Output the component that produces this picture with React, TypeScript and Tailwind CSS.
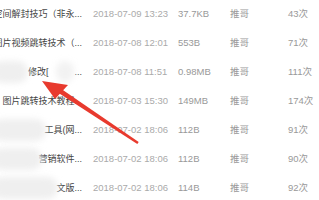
import React from 'react';

type Row = { name: React.ReactNode; date: string; size: string; author: string; count: string };

const ROWS: Row[] = [
  { name: '空间解封技巧（非永...', date: '2018-07-09 13:23', size: '37.7KB', author: '推哥', count: '43次' },
  { name: '图片视频跳转技术（...', date: '2018-07-08 12:01', size: '553B', author: '推哥', count: '71次' },
  {
    name: (
      <>
        <span>修改[</span>
        <span className="ml-[26px]">...</span>
      </>
    ),
    date: '2018-07-08 11:51',
    size: '0.98MB',
    author: '推哥',
    count: '111次',
  },
  { name: '图片跳转技术教程...', date: '2018-07-03 15:30', size: '149MB', author: '推哥', count: '174次' },
  { name: '工具(网...', date: '2018-07-02 18:06', size: '112B', author: '推哥', count: '91次' },
  { name: '营销软件...', date: '2018-07-02 18:06', size: '112B', author: '推哥', count: '90次' },
  { name: '文版...', date: '2018-07-02 18:06', size: '114B', author: '推哥', count: '92次' },
];

export default function App() {
  return (
    <div
      className="relative w-[319px] h-[200px] overflow-hidden bg-white text-[9.5px]"
      style={{ fontFamily: '"Liberation Sans", "Noto Sans CJK SC", sans-serif' }}
    >
      <div className="flex flex-col">
        {ROWS.map((r, i) => (
          <div key={i} className="flex items-center h-[29px] whitespace-nowrap">
            <div className="w-[82px] shrink-0 flex justify-end overflow-hidden text-[9px] text-[#444]">{r.name}</div>
            <div className="ml-[11px] w-[85px] shrink-0 text-[#aaa]">{r.date}</div>
            <div className="w-[52px] shrink-0 text-[#999]">{r.size}</div>
            <div className="w-[58px] shrink-0 text-[#999]">{r.author}</div>
            <div className="text-[#999]">{r.count}</div>
          </div>
        ))}
      </div>

      {/* smudges over names */}
      <div className="absolute left-[-8px] top-[61px] w-[36px] h-[22px] rounded-full bg-[#efefef] blur-[3px]" />
      <div className="absolute left-[56px] top-[61px] w-[18px] h-[21px] rounded-full bg-[#f2f2f2] blur-[3px]" />
      <div className="absolute left-[-8px] top-[119px] w-[54px] h-[22px] rounded-full bg-[#efefef] blur-[3px]" />
      <div className="absolute left-[-8px] top-[148px] w-[50px] h-[22px] rounded-full bg-[#efefef] blur-[3px]" />
      <div className="absolute left-[-8px] top-[177px] w-[66px] h-[22px] rounded-full bg-[#efefef] blur-[3px]" />

      {/* red arrow */}
      <svg className="absolute left-0 top-0" width="319" height="200" viewBox="0 0 319 200">
        <polygon points="58.6,93.1 61.4,88.9 138.7,142 137.3,144" fill="#e83a2e" />
        <polygon points="42,81 68,85 55,99" fill="#e83a2e" />
      </svg>
    </div>
  );
}
